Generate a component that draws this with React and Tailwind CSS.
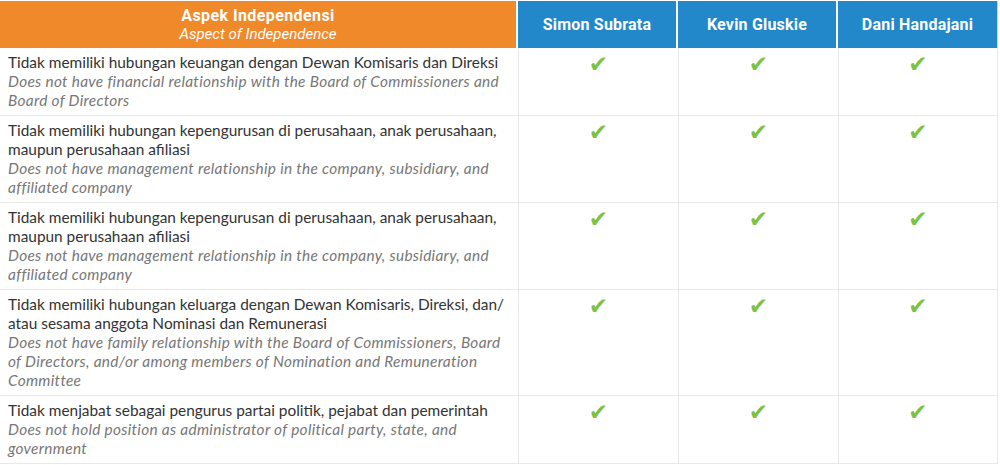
import React from "react";

const rows = [
  {
    id: "Tidak memiliki hubungan keuangan dengan Dewan Komisaris dan Direksi",
    en: "Does not have financial relationship with the Board of Commissioners and Board of Directors",
  },
  {
    id: "Tidak memiliki hubungan kepengurusan di perusahaan, anak perusahaan, maupun perusahaan afiliasi",
    en: "Does not have management relationship in the company, subsidiary, and affiliated company",
  },
  {
    id: "Tidak memiliki hubungan kepengurusan di perusahaan, anak perusahaan, maupun perusahaan afiliasi",
    en: "Does not have management relationship in the company, subsidiary, and affiliated company",
  },
  {
    id: "Tidak memiliki hubungan keluarga dengan Dewan Komisaris, Direksi, dan/ atau sesama anggota Nominasi dan Remunerasi",
    en: "Does not have family relationship with the Board of Commissioners, Board of Directors, and/or among members of Nomination and Remuneration Committee",
  },
  {
    id: "Tidak menjabat sebagai pengurus partai politik, pejabat dan pemerintah",
    en: "Does not hold position as administrator of political party, state, and government",
  },
];

const members = ["Simon Subrata", "Kevin Gluskie", "Dani Handajani"];

function Check() {
  return (
    <span className="text-[23px] leading-none text-[#7cc243]" style={{ fontFamily: '"DejaVu Sans", sans-serif' }}>
      ✔
    </span>
  );
}

export default function App() {
  return (
    <div className="w-[1000px] h-[465px] bg-white pt-px" style={{ fontFamily: "Lato, sans-serif" }}>
      <div className="grid grid-cols-[518px_160px_160px_160px] w-[998px]">
        {/* Header */}
        <div className="h-[47px] bg-[#f0892a] border-r-2 border-white flex flex-col items-center justify-center text-white leading-[19px]" style={{ fontFamily: "Roboto, sans-serif" }}>
          <div className="font-bold text-[16px] tracking-[0.4px]">Aspek Independensi</div>
          <div className="italic text-[15px]">Aspect of Independence</div>
        </div>
        {members.map((m, i) => (
          <div
            key={m}
            className={`h-[47px] bg-[#2388c9] flex items-center justify-center text-white font-bold text-[16px] tracking-[0.2px] ${i < 2 ? "border-r-2 border-white" : "border-r border-[#b9d8ee]"}`}
            style={{ fontFamily: "Roboto, sans-serif" }}
          >
            {m}
          </div>
        ))}

        {/* Body */}
        {rows.map((r, idx) => (
          <React.Fragment key={idx}>
            <div className="border-b border-[#e8e8e8] pl-2 pr-3 pt-[5px] pb-[5px] text-[15.4px] leading-[19px]">
              <div className="text-[#333333]">{r.id}</div>
              <div className="italic text-[#777777] tracking-[0.3px]">{r.en}</div>
            </div>
            {members.map((m, i) => (
              <div
                key={m}
                className={`border-b border-l border-[#e8e8e8] flex justify-center pt-[5px] ${i === 2 ? "border-r" : ""}`}
              >
                <Check />
              </div>
            ))}
          </React.Fragment>
        ))}
      </div>
    </div>
  );
}
